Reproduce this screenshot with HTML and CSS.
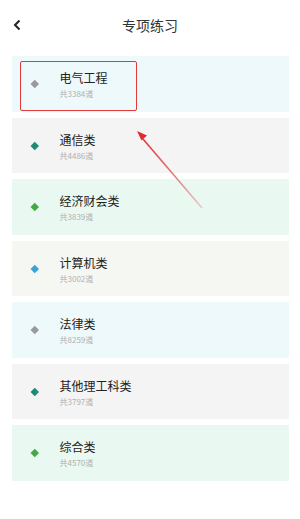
FILE: index.html
```html
<!DOCTYPE html>
<html lang="zh-CN">
<head>
    <meta charset="UTF-8">
    <meta name="viewport" content="width=device-width, initial-scale=1.0">
    <title>专项练习</title>
    <link rel="stylesheet" href="styles.css">
</head>
<body>

<div class="page">
    <div class="top-bar">
        <span class="back">
            <svg width="10" height="12" viewBox="0 0 10 12"><path d="M7.5 1.5 L3 6 L7.5 10.5" fill="none" stroke="#222" stroke-width="2"/></svg>
        </span>
        <h1 class="page-title">专项练习</h1>
    </div>

    <div class="topic-list">
        <div class="topic-card cyan">
            <span class="dot gray"></span>
            <div class="topic-text">
                <div class="topic-name">电气工程</div>
                <div class="topic-count">共3384道</div>
            </div>
            <span class="highlight-box"></span>
        </div>
        <div class="topic-card gray-bg">
            <span class="dot teal"></span>
            <div class="topic-text">
                <div class="topic-name">通信类</div>
                <div class="topic-count">共4486道</div>
            </div>
        </div>
        <div class="topic-card mint">
            <span class="dot green"></span>
            <div class="topic-text">
                <div class="topic-name">经济财会类</div>
                <div class="topic-count">共3839道</div>
            </div>
        </div>
        <div class="topic-card warm">
            <span class="dot blue"></span>
            <div class="topic-text">
                <div class="topic-name">计算机类</div>
                <div class="topic-count">共3002道</div>
            </div>
        </div>
        <div class="topic-card cyan">
            <span class="dot gray"></span>
            <div class="topic-text">
                <div class="topic-name">法律类</div>
                <div class="topic-count">共8259道</div>
            </div>
        </div>
        <div class="topic-card gray-bg">
            <span class="dot teal"></span>
            <div class="topic-text">
                <div class="topic-name">其他理工科类</div>
                <div class="topic-count">共3797道</div>
            </div>
        </div>
        <div class="topic-card mint">
            <span class="dot green"></span>
            <div class="topic-text">
                <div class="topic-name">综合类</div>
                <div class="topic-count">共4570道</div>
            </div>
        </div>
    </div>

    <!-- annotation arrow pointing at first card -->
    <svg class="arrow" width="300" height="519" viewBox="0 0 300 519">
        <defs>
            <linearGradient id="fade" x1="202" y1="208" x2="138" y2="132" gradientUnits="userSpaceOnUse">
                <stop offset="0" stop-color="#e8c8c8"/>
                <stop offset="0.6" stop-color="#e26060"/>
                <stop offset="1" stop-color="#e02c2c"/>
            </linearGradient>
        </defs>
        <path d="M202 208 L143 139" stroke="url(#fade)" stroke-width="1.6" fill="none"/>
        <path d="M137 131 L147 135.5 L141.5 140.5 Z" fill="#e02c2c"/>
    </svg>
</div>

</body>
</html>
```

FILE: styles.css
```css
body {
    margin: 0;
    font-family: "Noto Sans CJK SC", "Noto Sans", sans-serif;
    background-color: #fff;
    color: #222;
}
.page {
    position: relative;
    width: 300px;
    height: 519px;
    overflow: hidden;
}
.top-bar {
    display: flex;
    align-items: center;
    justify-content: center;
    height: 50px;
    position: relative;
}
.back {
    position: absolute;
    left: 12px;
    top: 19px;
    display: flex;
}
.page-title {
    margin: 0;
    font-size: 14px;
    font-weight: 400;
    color: #333;
}
.topic-list {
    display: flex;
    flex-direction: column;
    gap: 6px;
    padding: 6px 11px 0 12px;
}
.topic-card {
    position: relative;
    display: flex;
    align-items: center;
    height: 55.5px;
    padding-left: 20px;
    box-sizing: border-box;
}
.cyan { background-color: #eef9fb; }
.gray-bg { background-color: #f4f4f4; }
.mint { background-color: #e9f9f1; }
.warm { background-color: #f5f7f3; }
.dot {
    width: 5.5px;
    height: 5.5px;
    transform: rotate(45deg);
    margin-right: 22px;
    flex-shrink: 0;
}
.dot.gray { background-color: #9a9a9a; }
.dot.teal { background-color: #1f8a76; }
.dot.green { background-color: #45a844; }
.dot.blue { background-color: #3aa2d6; }
.topic-text {
    display: flex;
    flex-direction: column;
    gap: 4px;
    padding-top: 2px;
}
.topic-name {
    font-size: 12px;
    line-height: 15px;
    color: #222;
}
.topic-count {
    font-size: 8px;
    line-height: 10px;
    color: #b0b0b0;
}
.highlight-box {
    position: absolute;
    left: 8px;
    top: 5px;
    width: 117px;
    height: 50px;
    border: 1.5px solid #e03a3a;
    border-radius: 2px;
    box-sizing: border-box;
}
.arrow {
    position: absolute;
    left: 0;
    top: 0;
    pointer-events: none;
}
```
